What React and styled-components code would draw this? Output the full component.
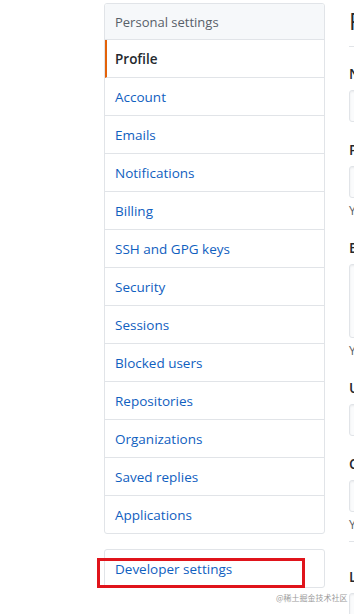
import React from "react";
import styled, { createGlobalStyle } from "styled-components";

const Global = createGlobalStyle`
  html, body { margin: 0; padding: 0; background: #fff; overflow: hidden; }
  body { font-family: "Open Sans", "Noto Sans", sans-serif; color: #24292e; }
  * { box-sizing: border-box; }
`;

const Page = styled.div`
  position: relative;
  display: flex;
  align-items: flex-start;
  gap: 24px;
  padding: 3px 0 0 104px;
  width: 900px;
  height: 614px;
`;

const Sidebar = styled.nav`
  position: relative;
  flex: 0 0 221px;
  display: flex;
  flex-direction: column;
  gap: 15px;
`;

const Menu = styled.div`
  border: 1px solid #e1e4e8;
  border-radius: 3px;
  background: #fff;
  overflow: hidden;
`;

const MenuHeading = styled.div`
  height: 36px;
  display: flex;
  align-items: center;
  padding: 0 10px;
  font-size: 13px;
  color: #586069;
  background: #f6f8fa;
  border-bottom: 1px solid #e1e4e8;
`;

const MenuItem = styled.a`
  display: flex;
  align-items: center;
  height: 38px;
  padding: 0 10px 0 ${(p) => (p.$selected ? "8px" : "10px")};
  font-size: 13.5px;
  text-decoration: none;
  color: ${(p) => (p.$selected ? "#24292e" : "#1060c0")};
  font-weight: ${(p) => (p.$selected ? 600 : 400)};
  border-left: ${(p) => (p.$selected ? "2px solid #e36209" : "none")};
  border-bottom: 1px solid #e1e4e8;
  &:last-child { border-bottom: none; height: 37px; }
`;

const Highlight = styled.div`
  position: absolute;
  left: -7px;
  bottom: 0;
  width: 208px;
  height: 30px;
  border: 3px solid #e0141b;
  pointer-events: none;
`;

const Watermark = styled.div`
  position: absolute;
  left: 276px;
  top: 593px;
  font-size: 8px;
  line-height: 10px;
  color: #9a9a9a;
  font-family: "Noto Sans CJK SC", sans-serif;
  white-space: nowrap;
`;

const Content = styled.main`
  flex: 0 0 440px;
  display: flex;
  flex-direction: column;
`;

const Subhead = styled.h2`
  margin: 0 0 16px;
  padding-bottom: 7px;
  font-size: 24px;
  font-weight: 400;
  line-height: 36px;
  border-bottom: 1px solid #e1e4e8;
`;

const Group = styled.div`
  display: flex;
  flex-direction: column;
  margin-bottom: ${(p) => (p.$last ? 0 : 17)}px;
`;

const Label = styled.label`
  font-size: 14px;
  font-weight: 600;
  line-height: 21px;
  margin-bottom: 6px;
`;

const Input = styled.div`
  width: 440px;
  height: ${(p) => p.$h || 32}px;
  border: 1px solid #e1e4e8;
  border-radius: 3px;
  background: #fafbfc;
  box-shadow: inset 0 1px 2px rgba(27, 31, 35, 0.075);
`;

const Note = styled.p`
  margin: 4px 0 0;
  font-size: 12px;
  line-height: 18px;
  color: #586069;
`;

const Divider = styled.hr`
  margin: 7px 0 24px;
  border: 0;
  border-top: 1px solid #e1e4e8;
`;

const items = [
  "Profile",
  "Account",
  "Emails",
  "Notifications",
  "Billing",
  "SSH and GPG keys",
  "Security",
  "Sessions",
  "Blocked users",
  "Repositories",
  "Organizations",
  "Saved replies",
  "Applications",
];

export default function App() {
  return (
    <>
      <Global />
      <Page>
        <Sidebar>
          <Menu>
            <MenuHeading>Personal settings</MenuHeading>
            {items.map((it, i) => (
              <MenuItem key={it} href="#" $selected={i === 0}>
                {it}
              </MenuItem>
            ))}
          </Menu>
          <Menu>
            <MenuItem href="#">Developer settings</MenuItem>
          </Menu>
          <Highlight />
        </Sidebar>
        <Content>
          <Subhead>Public profile</Subhead>
          <Group>
            <Label>Name</Label>
            <Input />
          </Group>
          <Group>
            <Label>Public email</Label>
            <Input />
            <Note>You can manage verified email addresses in your email settings.</Note>
          </Group>
          <Group>
            <Label>Bio</Label>
            <Input $h={74} />
            <Note>You can @mention other users and organizations to link to them.</Note>
          </Group>
          <Group>
            <Label>URL</Label>
            <Input />
          </Group>
          <Group $last>
            <Label>Company</Label>
            <Input />
            <Note>You can @mention your company's GitHub organization to link it.</Note>
          </Group>
          <Divider />
          <Group>
            <Label>Location</Label>
            <Input />
          </Group>
        </Content>
        <Watermark>@稀土掘金技术社区</Watermark>
      </Page>
    </>
  );
}
